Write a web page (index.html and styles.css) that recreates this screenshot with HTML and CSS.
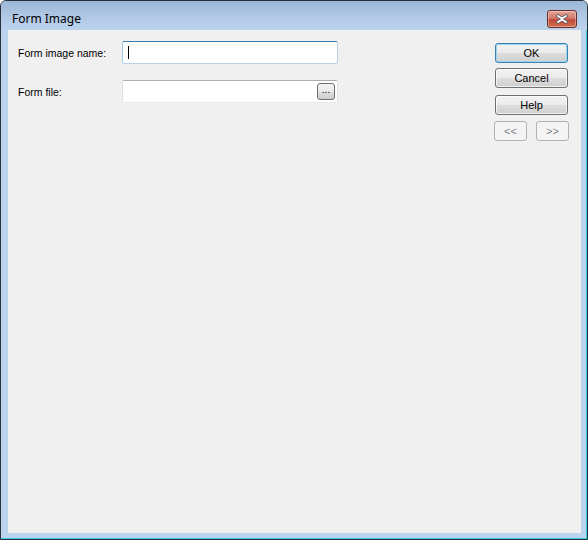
FILE: index.html
```html
<!DOCTYPE html>
<html>
<head>
<meta charset="utf-8">
<title>Form Image</title>
<link rel="stylesheet" href="styles.css">
</head>
<body>
<div class="window">
  <div class="titlebar">
    <span class="title">Form Image</span>
    <button class="close" aria-label="Close">
      <svg width="14" height="10" viewBox="0 0 14 10">
        <path d="M3 2 L7 4.6 L11 2 M3 8 L7 5.4 L11 8" fill="none" stroke="#5a5a5a" stroke-width="3.4" stroke-linecap="square" stroke-linejoin="round"/>
        <path d="M3 2 L7 4.6 L11 2 M3 8 L7 5.4 L11 8" fill="none" stroke="#fff" stroke-width="1.8" stroke-linecap="square" stroke-linejoin="round"/>
      </svg>
    </button>
  </div>
  <div class="frame">
    <div class="client">
      <div class="form">
        <div class="row">
          <label class="label">Form image name:</label>
          <div class="input focused"><span class="caret"></span></div>
        </div>
        <div class="row">
          <label class="label">Form file:</label>
          <div class="input plain"><button class="browse">...</button></div>
        </div>
      </div>
      <div class="buttons">
        <button class="btn default">OK</button>
        <button class="btn">Cancel</button>
        <button class="btn help">Help</button>
        <div class="navrow">
          <button class="btn nav" disabled>&lt;&lt;</button>
          <button class="btn nav" disabled>&gt;&gt;</button>
        </div>
      </div>
    </div>
  </div>
</div>
</body>
</html>
```

FILE: styles.css
```css
html, body {
  margin: 0;
  padding: 0;
  background: #ffffff;
}
.window {
  width: 586px;
  height: 538px;
  border: 1px solid #27313c;
  border-radius: 6px 6px 0 0;
  display: flex;
  flex-direction: column;
  background: #bcd3ee;
  box-shadow: inset -1px -1px 0 #3fcde4;
  overflow: hidden;
}
.titlebar {
  height: 29px;
  flex: none;
  display: flex;
  align-items: flex-start;
  background: linear-gradient(#9cb7d6, #b2cae6 60%, #bcd3ee);
}
.title {
  font-family: "Noto Sans", "Open Sans", sans-serif;
  font-size: 12px;
  color: #000;
  margin: 10px 0 0 11px;
  line-height: 16px;
}
.close {
  margin: 9px 10px 0 auto;
  width: 30px;
  height: 18px;
  padding: 0;
  border: 1px solid #6a2e2a;
  border-radius: 3px;
  background: linear-gradient(#e3a397, #d17a6a 45%, #c0483a 55%, #d2704e);
  box-shadow: inset 0 0 0 1px rgba(255,255,255,0.35);
  display: flex;
  align-items: center;
  justify-content: center;
}
.frame {
  flex: 1;
  padding: 0 6px 6px 7px;
  display: flex;
}
.client {
  flex: 1;
  background: #f0f0f0;
  display: flex;
  font-family: "Liberation Sans", Arial, sans-serif;
  font-size: 10.5px;
  color: #000;
}
.form {
  padding: 11px 0 0 10px;
  display: flex;
  flex-direction: column;
  gap: 16px;
}
.row {
  display: flex;
  align-items: center;
}
.label {
  width: 104px;
  flex: none;
}
.input {
  box-sizing: border-box;
  width: 216px;
  height: 23px;
  background: #fff;
  border: 1px solid;
  border-radius: 2px;
  display: flex;
  align-items: center;
}
.focused {
  border-color: #3d7bad #b5cfe7 #b7d3ec #a4c9e3;
}
.caret {
  width: 1px;
  height: 13px;
  background: #000;
  margin-left: 5px;
}
.plain {
  border-color: #abadb3 #e2e3ea #e3e9ef #dbdfe6;
  justify-content: flex-end;
}
.browse {
  box-sizing: border-box;
  width: 18px;
  height: 17px;
  margin-right: 2px;
  padding: 0 0 4px 0;
  border: 1px solid #707070;
  border-radius: 3px;
  background: linear-gradient(#f2f2f2, #ebebeb 50%, #dddddd 50%, #cfcfcf);
  font-family: "Liberation Sans", Arial, sans-serif;
  font-size: 10px;
  line-height: 10px;
  color: #000;
}
.buttons {
  margin-left: auto;
  margin-right: 12px;
  padding-top: 13px;
  display: flex;
  flex-direction: column;
  width: 75px;
}
.btn {
  box-sizing: border-box;
  width: 73px;
  height: 20px;
  margin-left: 1px;
  margin-bottom: 5px;
  padding: 0;
  border: 1px solid #707070;
  border-radius: 3px;
  background: linear-gradient(#f2f2f2, #ebebeb 50%, #dddddd 50%, #cfcfcf);
  box-shadow: inset 0 0 0 1px rgba(255,255,255,0.7);
  font-family: "Liberation Sans", Arial, sans-serif;
  font-size: 11px;
  color: #000;
}
.default {
  border-color: #3c7fb1;
  box-shadow: inset 0 0 0 1px #9ad6f0;
}
.help {
  margin-top: 2px;
  margin-bottom: 6px;
}
.navrow {
  display: flex;
  gap: 9px;
}
.nav {
  width: 33px;
  margin-left: 0;
  border-color: #adb2b5;
  background: #f4f4f4;
  box-shadow: none;
  color: #838383;
}
```
